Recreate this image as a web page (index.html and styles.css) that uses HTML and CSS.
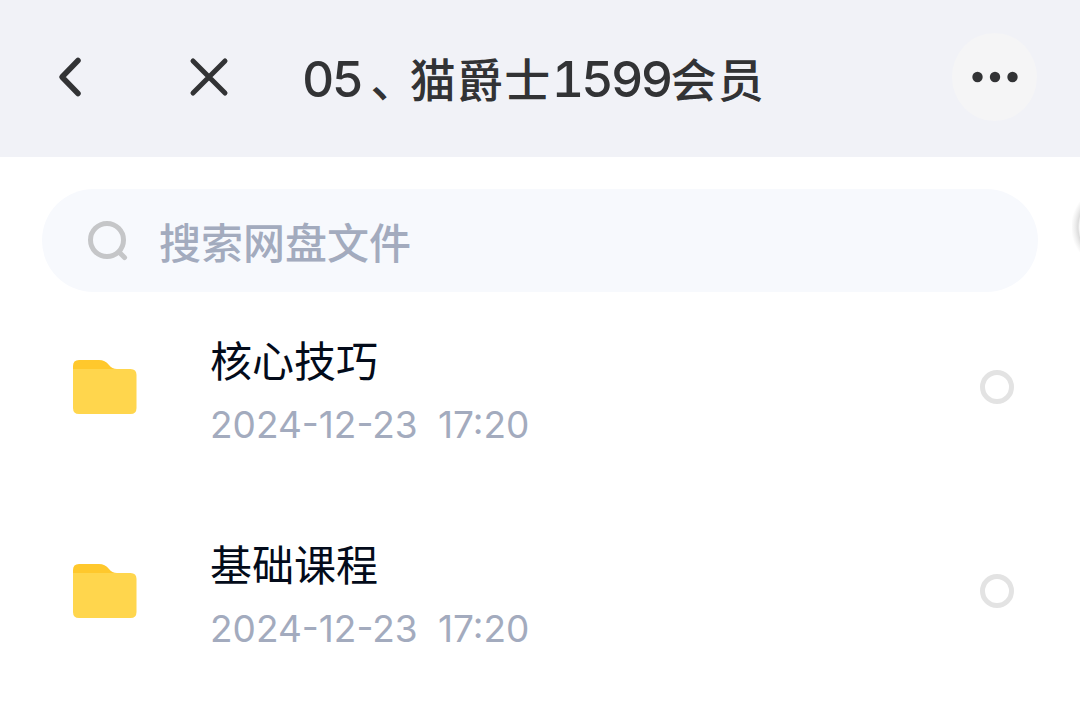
FILE: index.html
```html
<!DOCTYPE html>
<html lang="zh-CN">
<head>
    <meta charset="UTF-8">
    <meta name="viewport" content="width=device-width, initial-scale=1.0">
    <title>05、猫爵士1599会员</title>
    <link rel="stylesheet" href="styles.css">
</head>
<body>
    <header class="topbar">
        <svg class="back" width="28" height="48" viewBox="0 0 28 48">
            <path d="M21 7.500 L5 24 L21 40.500" />
        </svg>
        <svg class="close" width="40" height="40" viewBox="0 0 40 40">
            <path d="M4 4 L36 36 M36 4 L4 36" />
        </svg>
        <h1><span class="num">05</span><span class="comma">、</span>猫爵士<span class="num">1599</span>会员</h1>
        <button class="more">
            <svg width="48" height="12" viewBox="0 0 48 12">
                <circle cx="6.5" cy="6" r="5.2" />
                <circle cx="24" cy="6" r="5.2" />
                <circle cx="41.5" cy="6" r="5.2" />
            </svg>
        </button>
    </header>

    <div class="search-row">
        <div class="search">
            <svg width="42" height="42" viewBox="0 0 42 42">
                <circle cx="20" cy="20" r="16.5" />
                <path d="M32 32 L37.500 37.500" />
            </svg>
            <span>搜索网盘文件</span>
        </div>
        <div class="side-tab"></div>
    </div>

    <ul class="files">
        <li>
            <svg class="folder" width="64" height="56" viewBox="0 0 64 56">
                <path class="tab" d="M0 20 V7 Q0 1 6 1 H26 Q32 1 36 6 Q39 10 44 10 V20 Z" />
                <path class="front" d="M0 10 H57.500 Q63.500 10 63.500 16 V49 Q63.500 55 57.500 55 H6 Q0 55 0 49 Z" />
            </svg>
            <div class="info">
                <div class="name">核心技巧</div>
                <div class="date">2024-12-23 17:20</div>
            </div>
            <span class="check"></span>
        </li>
        <li>
            <svg class="folder" width="64" height="56" viewBox="0 0 64 56">
                <path class="tab" d="M0 20 V7 Q0 1 6 1 H26 Q32 1 36 6 Q39 10 44 10 V20 Z" />
                <path class="front" d="M0 10 H57.500 Q63.500 10 63.500 16 V49 Q63.500 55 57.500 55 H6 Q0 55 0 49 Z" />
            </svg>
            <div class="info">
                <div class="name">基础课程</div>
                <div class="date">2024-12-23 17:20</div>
            </div>
            <span class="check"></span>
        </li>
    </ul>
</body>
</html>
```
FILE: styles.css
```css
* {
    box-sizing: border-box;
}
body {
    margin: 0;
    background-color: #fff;
    font-family: "Noto Sans CJK SC", sans-serif;
}
.topbar {
    display: flex;
    align-items: center;
    height: 157px;
    padding: 0 43px 3px 57px;
    background-color: #f1f2f7;
}
.back, .close {
    fill: none;
    stroke: #323335;
    stroke-linecap: round;
    stroke-linejoin: round;
}
.back {
    stroke-width: 5.5;
}
.close {
    margin-left: 104px;
    stroke-width: 5;
}
h1 {
    margin: 2px 0 0 73px;
    color: #323335;
    font-size: 46px;
    font-weight: 500;
    line-height: 70px;
    letter-spacing: 1.3px;
    white-space: nowrap;
}
.num {
    font-family: Inter, sans-serif;
    font-size: 50px;
    font-variant-numeric: tabular-nums;
    letter-spacing: -2.7px;
}
/* half-width form of the comma */
.comma {
    margin: 0 15px 0 9px;
    font-feature-settings: "halt";
}
.more {
    display: flex;
    align-items: center;
    justify-content: center;
    width: 85px;
    height: 88px;
    margin-left: auto;
    padding: 0;
    border: none;
    border-radius: 50%;
    background-color: #f5f5f6;
    fill: #323335;
}
.search-row {
    display: flex;
    justify-content: space-between;
    margin-top: 32px;
    padding-left: 42px;
}
.search {
    display: flex;
    align-items: center;
    width: 996px;
    height: 103px;
    padding-left: 45px;
    border-radius: 52px;
    background-color: #f7f9fd;
    color: #a3abbe;
    font-size: 42px;
    font-weight: 500;
}
.search svg {
    margin-right: 30px;
    fill: none;
    stroke: #c5c6c8;
    stroke-width: 5;
    stroke-linecap: round;
}
/* edge of the floating button */
.side-tab {
    width: 8px;
    height: 90px;
    background: radial-gradient(circle at 42px 38px, #fff 34px, #ddd 36px, #eee 39px, #fff 43px);
}
.files {
    margin: 0;
    padding: 0;
    list-style: none;
}
.files li {
    display: flex;
    align-items: center;
    height: 204px;
    padding: 0 66px 14px 73px;
}
.folder .tab {
    fill: #ffc82c;
}
.folder .front {
    fill: #ffd64d;
}
.info {
    flex: 1;
    margin: 11px 0 0 73px;
}
.name {
    color: #030b1a;
    font-size: 42px;
    line-height: 64px;
}
.date {
    color: #a3abbe;
    font-family: Inter, sans-serif;
    font-size: 37px;
    line-height: 68px;
    word-spacing: 10px;
}
.check {
    width: 34px;
    height: 34px;
    border: 5px solid #e3e3e3;
    border-radius: 50%;
}
```
